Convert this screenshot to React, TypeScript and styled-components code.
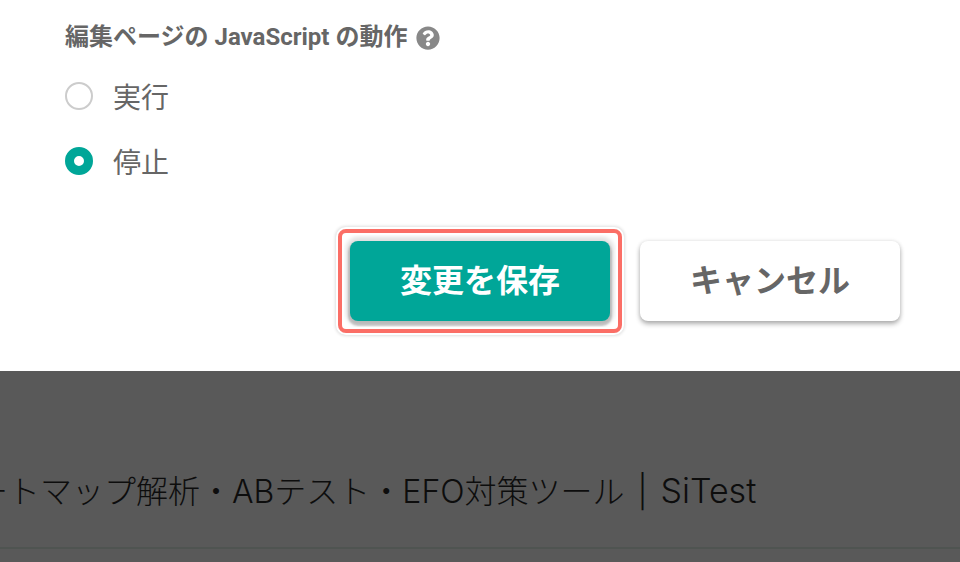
import React from "react";
import styled, { createGlobalStyle } from "styled-components";
import { FaQuestionCircle } from "react-icons/fa";

const Global = createGlobalStyle`
  html, body { margin: 0; padding: 0; background: #595959; }
  body { width: 960px; height: 562px; overflow: hidden; font-family: Roboto, "Noto Sans CJK JP", sans-serif; }
`;

const Panel = styled.section`
  height: 371px;
  box-sizing: border-box;
  background: #fff;
  padding: 18px 60px 0 65px;
  display: flex;
  flex-direction: column;
`;

const Title = styled.div`
  display: flex;
  align-items: center;
  gap: 9px;
  height: 32px;
  font-size: 24px;
  font-weight: 700;
  color: #666;
  white-space: nowrap;
`;

const Help = styled(FaQuestionCircle)`
  width: 24px;
  height: 24px;
  color: #888;
  margin-top: 8px;
`;

const Options = styled.div`
  display: flex;
  flex-direction: column;
  gap: 25px;
  margin-top: 26px;
`;

const Option = styled.label`
  display: flex;
  align-items: center;
  gap: 20px;
  height: 40px;
  font-size: 28px;
  color: #666;
`;

const Radio = styled.span<{ $on?: boolean }>`
  box-sizing: border-box;
  width: 28px;
  height: 28px;
  border-radius: 50%;
  background: #fff;
  border: ${(p) => (p.$on ? "9px solid #00a698" : "2px solid #ccc")};
`;

const Actions = styled.div`
  display: flex;
  justify-content: flex-end;
  gap: 30px;
  margin-top: 60px;
`;

const Button = styled.button`
  position: relative;
  width: 260px;
  height: 80px;
  border: none;
  border-radius: 8px;
  padding: 0 0 6px;
  font-family: inherit;
  font-size: 32px;
  font-weight: 700;
`;

const Primary = styled(Button)`
  background: #00a698;
  color: #fff;
  box-shadow: 0 3px 2px 2px rgba(0, 0, 0, 0.18), 0 0 4px 4px rgba(0, 0, 0, 0.12);

  &::after {
    content: "";
    position: absolute;
    inset: -12px;
    border: 4px solid #fb6e66;
    border-radius: 8px;
    box-shadow: 0 0 0 2px #fff, inset 0 0 0 2px #fff, 0 0 3px 3px rgba(0, 0, 0, 0.12);
    pointer-events: none;
  }
`;

const Secondary = styled(Button)`
  background: #fff;
  color: #666;
  box-shadow: 0 3px 5px rgba(0, 0, 0, 0.3), 0 0 4px rgba(0, 0, 0, 0.1);
`;

const Backdrop = styled.section`
  height: 191px;
  overflow: hidden;
  display: flex;
  flex-direction: column;
`;

const PageTitle = styled.div`
  margin-top: 97px;
  margin-left: -56px;
  height: 46px;
  line-height: 46px;
  font-size: 32px;
  font-family: Inter, "Noto Sans CJK JP", sans-serif;
  font-weight: 300;
  color: #0d0d0d;
  white-space: nowrap;
  word-spacing: 4px;
`;

const Brand = styled.span`
  font-size: 34px;
`;

const Rule = styled.div`
  margin-top: 33px;
  height: 2px;
  background: #4f5451;
`;

export default function App() {
  return (
    <>
      <Global />
      <Panel>
        <Title>
          編集ページの JavaScript の動作
          <Help />
        </Title>
        <Options>
          <Option>
            <Radio />
            実行
          </Option>
          <Option>
            <Radio $on />
            停止
          </Option>
        </Options>
        <Actions>
          <Primary>変更を保存</Primary>
          <Secondary>キャンセル</Secondary>
        </Actions>
      </Panel>
      <Backdrop>
        <PageTitle>
          ヒートマップ解析・ABテスト・EFO対策ツール | <Brand>SiTest</Brand>
        </PageTitle>
        <Rule />
      </Backdrop>
    </>
  );
}
